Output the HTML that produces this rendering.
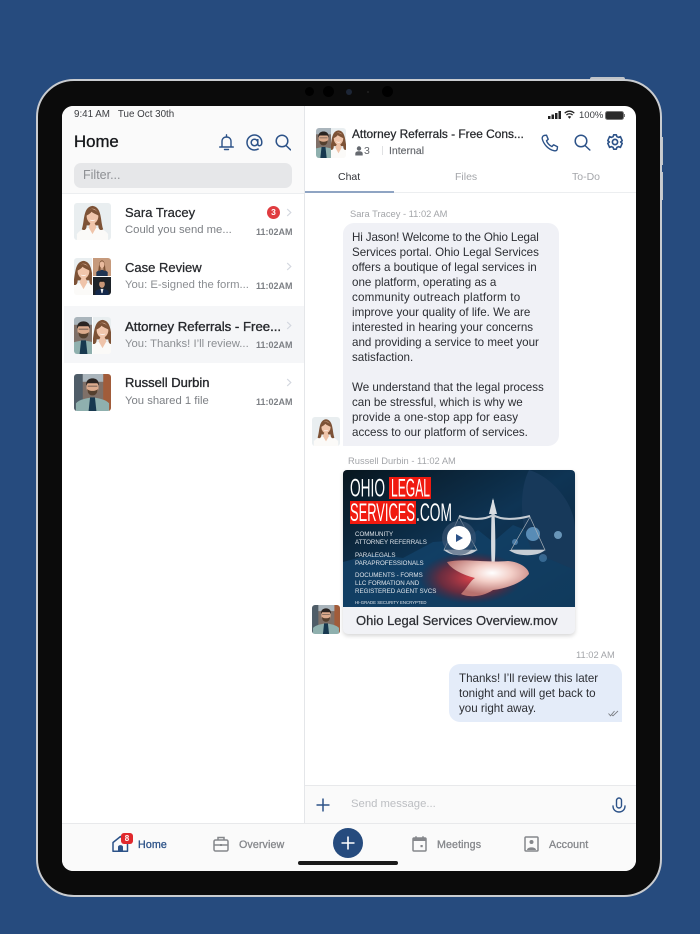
<!DOCTYPE html>
<html><head><meta charset="utf-8"><style>
*{box-sizing:border-box;margin:0;padding:0}
html,body{width:700px;height:934px;overflow:hidden;background:#264b7e;font-family:"Liberation Sans",sans-serif}
.a{position:absolute}
.t{position:absolute;white-space:nowrap;line-height:1}
.name{font-size:13px;color:#26282c;font-weight:normal;-webkit-text-stroke:.25px #26282c}
.sub{font-size:11.3px;color:#7d8085}
.time{font-size:9px;color:#7d8085;font-weight:bold}
.msg{font-size:11.6px;color:#2c2e33}
.meta{font-size:9.35px;color:#a3a5a9}
.nav{font-size:10.7px;color:#85878b;-webkit-text-stroke:.3px #85878b;letter-spacing:.1px}
.av{position:absolute;overflow:hidden;border-radius:3px}
.av svg{filter:blur(.35px)}
svg{position:absolute;display:block}
</style></head><body>
<svg width="0" height="0" style="position:absolute"><defs>
<symbol id="w" viewBox="0 0 38 38" preserveAspectRatio="xMidYMid slice"><rect width="38" height="38" fill="#e9eef0"/><path d="M3 38V32C6 27 12 26 19 25C26 26 32 27 35 32V38Z" fill="#fbfaf8"/><path d="M8 27C11 19 9 4 19 3C29 4 27 19 30 27C27 29 25 27 25 23H13C13 27 11 29 8 27Z" fill="#7d5236"/><path d="M15 25L19 32L23 25L21 20H17Z" fill="#efc4aa"/><ellipse cx="19" cy="13.500" rx="6" ry="7.600" fill="#f0c5ab"/><path d="M12.500 13C13 7 17 5.500 20 6.500C23 7.500 25 9 25.500 13C22 11.500 19 10 18 9C17 10.500 15 12 12.500 13Z" fill="#7d5236"/><path d="M16 16.800C17.500 18 20.500 18 22 16.800C21 19 17 19 16 16.800Z" fill="#fff"/></symbol>
<symbol id="m" viewBox="0 0 38 38" preserveAspectRatio="xMidYMid slice"><rect width="38" height="38" fill="#7f7068"/><rect x="0" width="9" height="38" fill="#4f5d68"/><rect x="30" width="8" height="38" fill="#a15c3a"/><rect x="9" width="21" height="8" fill="#aab5bc"/><path d="M2 38V30C6 26 12 25 19 24C26 25 32 26 36 30V38Z" fill="#8fb0ae"/><path d="M15 38L16.500 24H21.500L23 38Z" fill="#17384f"/><ellipse cx="19" cy="13.500" rx="6.200" ry="8" fill="#dcab8d"/><path d="M12.500 12C12 6 16 4.500 19 4.500C22 4.500 26 6 25.500 12L24 9.500H14Z" fill="#2a2421"/><path d="M13.500 15.500C14 20 16 22 19 22C22 22 24 20 24.500 15.500C22 18 16 18 13.500 15.500Z" fill="#54402f"/><path d="M14 12.500H24" stroke="#2c2c2c" stroke-width="1" opacity=".6"/></symbol>
<symbol id="d" viewBox="0 0 38 38" preserveAspectRatio="xMidYMid slice"><rect width="38" height="38" fill="#1d2228"/><path d="M5 38V30C9 26 14 25 19 25C24 25 29 26 33 30V38Z" fill="#14294b"/><path d="M16 25H22L20 34H18Z" fill="#eee"/><ellipse cx="19" cy="15" rx="6" ry="8" fill="#c99676"/><path d="M13 13C13 8 16 7 19 7C22 7 25 8 25 13L23.500 10H14.500Z" fill="#151515"/></symbol>
<symbol id="w2" viewBox="0 0 38 38" preserveAspectRatio="xMidYMid slice"><rect width="38" height="38" fill="#c69a7c"/><path d="M7 38V30C10 26 15 25 19 25C23 25 28 26 31 30V38Z" fill="#1f3554"/><path d="M11 27C13 18 12 6 19 5C26 6 25 18 27 27H22V20H16V27Z" fill="#7b5135"/><ellipse cx="19" cy="14" rx="5" ry="7" fill="#e9bb9f"/></symbol>
<linearGradient id="vg" x1="0" y1="0" x2="1" y2="1"><stop offset="0" stop-color="#08161f"/><stop offset=".5" stop-color="#0e3454"/><stop offset="1" stop-color="#0b2238"/></linearGradient>
<radialGradient id="glow" cx=".5" cy=".5" r=".5"><stop offset="0" stop-color="#d8424a"/><stop offset=".6" stop-color="#8f2530" stop-opacity=".7"/><stop offset="1" stop-color="#5a1a2b" stop-opacity="0"/></radialGradient>
<radialGradient id="hand" cx=".55" cy=".35" r=".6"><stop offset="0" stop-color="#fff"/><stop offset=".4" stop-color="#f3cfc8"/><stop offset="1" stop-color="#b9716e"/></radialGradient>
</defs></svg>

<!-- device -->
<div class="a" style="left:590px;top:77px;width:35px;height:5px;background:#bfc3c8;border-radius:2px 2px 0 0"></div>
<div class="a" style="left:660px;top:137px;width:3px;height:28px;background:#c2c6ca"></div>
<div class="a" style="left:660px;top:172px;width:3px;height:28px;background:#c2c6ca"></div>
<div class="a" style="left:36px;top:79px;width:626px;height:818px;background:#0b0b0b;border:2px solid #c9ccd0;border-radius:38px"></div>
<div class="a" style="left:305px;top:87px;width:9px;height:9px;border-radius:50%;background:#000"></div>
<div class="a" style="left:323px;top:86px;width:11px;height:11px;border-radius:50%;background:#000"></div>
<div class="a" style="left:346px;top:89px;width:6px;height:6px;border-radius:50%;background:#1d2636"></div>
<div class="a" style="left:367px;top:91px;width:2px;height:2px;border-radius:50%;background:#222"></div>
<div class="a" style="left:382px;top:86px;width:11px;height:11px;border-radius:50%;background:#000"></div>

<!-- screen -->
<div class="a" style="left:62px;top:106px;width:574px;height:765px;background:#fff;border-radius:11px;overflow:hidden">
  <div class="a" style="left:0;top:0;width:242px;height:87px;background:#fafafa"></div>
  <div class="a" style="left:0;top:87px;width:242px;height:1px;background:#eceef0"></div>
  <div class="a" style="left:242px;top:0;width:1px;height:717px;background:#e4e6e9"></div>
  <div class="a" style="left:2px;top:200px;width:240px;height:57px;background:#f5f6f8"></div>
  <div class="a" style="left:243px;top:86px;width:331px;height:1px;background:#eceef0"></div>
  <div class="a" style="left:243px;top:85px;width:89px;height:2px;background:#8fa4c3"></div>
  <div class="a" style="left:243px;top:679px;width:331px;height:38px;background:#fafafa;border-top:1px solid #e8e9eb"></div>
  <div class="a" style="left:0;top:717px;width:574px;height:48px;background:#fafafa;border-top:1px solid #e8e9eb"></div>
  <div class="a" style="left:12px;top:57px;width:218px;height:25px;background:#e6e7e9;border-radius:7px"></div>
</div>

<!-- status -->
<div class="t" style="left:74px;top:110px;font-size:9.8px;color:#3a3c40">9:41 AM&nbsp;&nbsp; Tue Oct 30th</div>
<svg style="left:548px;top:111px" width="14" height="8"><rect x="0" y="5" width="2.500" height="3" fill="#222"/><rect x="3.500" y="3.500" width="2.500" height="4.500" fill="#222"/><rect x="7" y="2" width="2.500" height="6" fill="#222"/><rect x="10.500" y="0" width="2.500" height="8" fill="#222"/></svg>
<svg style="left:564px;top:110px" width="11" height="9" viewBox="0 0 11 9" fill="none" stroke="#222" stroke-width="1.300"><path d="M.7 3.200C3.500.5 7.500.5 10.300 3.200M2.400 5C4.200 3.300 6.800 3.300 8.600 5"/><path d="M5.500 8.800L3.800 6.700C4.800 5.900 6.200 5.900 7.200 6.700Z" fill="#222" stroke="none"/></svg>
<div class="t" style="left:579px;top:110.500px;font-size:9.500px;color:#3a3c40">100%</div>
<div class="a" style="left:604.500px;top:111px;width:19px;height:9px;background:#2a2a2a;border:1px solid #777;border-radius:2.500px"></div>
<div class="a" style="left:623.500px;top:114px;width:1.500px;height:3px;background:#777"></div>

<!-- left header -->
<div class="t" style="left:74px;top:134px;font-size:16.800px;color:#16181b;-webkit-text-stroke:.35px #16181b">Home</div>
<svg style="left:219px;top:134px" width="15" height="17" viewBox="0 0 15 17" fill="none" stroke="#2c5288" stroke-width="1.400"><path d="M3 12.500V7.500C3 4.800 4.800 3 7.500 3C10.200 3 12 4.800 12 7.500V12.500"/><path d="M.8 13H14.200" stroke-linecap="round" stroke-width="1.600"/><path d="M7.500 .8V3M5.500 15.500H9.500" stroke-linecap="round"/></svg>
<svg style="left:246px;top:134px" width="17" height="17" viewBox="0 0 17 17" fill="none" stroke="#2c5288" stroke-width="1.500"><circle cx="8.500" cy="8.500" r="3.300"/><path d="M11.800 5V10C11.800 12.500 15.800 12.500 15.800 8.500C15.800 4.300 12.500 1 8.500 1C4.400 1 1 4.300 1 8.500C1 12.700 4.400 16 8.500 16C10.200 16 11.500 15.600 12.700 14.800"/></svg>
<svg style="left:275px;top:134px" width="16" height="17" viewBox="0 0 16 17" fill="none" stroke="#2c5288" stroke-width="1.500"><circle cx="7" cy="7" r="5.800"/><path d="M11 11.500L15.500 15.800" stroke-linecap="round"/></svg>
<div class="t" style="left:83px;top:169px;font-size:12.500px;color:#8e9094">Filter...</div>

<!-- list -->
<div class="av" style="left:74px;top:203px;width:37px;height:37px"><svg width="37" height="37"><use href="#w" width="37" height="37"/></svg></div>
<div class="t name" style="left:125px;top:206px">Sara Tracey</div>
<div class="t sub" style="left:125px;top:224.500px">Could you send me...</div>
<div class="a" style="left:267px;top:206px;width:13px;height:13px;border-radius:50%;background:#e03c40;color:#fff;font-size:8.500px;font-weight:bold;text-align:center;line-height:13px">3</div>
<svg style="left:286px;top:208px" width="6" height="9" fill="none" stroke="#d3d7df" stroke-width="1.200"><path d="M1.200 1L4.800 4.500L1.200 8"/></svg>
<div class="t time" style="left:256px;top:227.500px">11:02AM</div>

<div class="av" style="left:74px;top:258px;width:37px;height:37px;background:#fff">
 <svg style="left:0;top:0" width="18" height="37"><use href="#w" x="-9" y="0" width="37" height="37"/></svg>
 <svg style="left:19px;top:0" width="18" height="18"><use href="#w2" width="18" height="18"/></svg>
 <svg style="left:19px;top:19px" width="18" height="18"><use href="#d" width="18" height="18"/></svg>
</div>
<div class="t name" style="left:125px;top:261px">Case Review</div>
<div class="t sub" style="left:125px;top:279.500px;color:#8b8e92">You: E-signed the form...</div>
<svg style="left:286px;top:262px" width="6" height="9" fill="none" stroke="#d3d7df" stroke-width="1.200"><path d="M1.200 1L4.800 4.500L1.200 8"/></svg>
<div class="t time" style="left:256px;top:281.500px">11:02AM</div>

<div class="av" style="left:74px;top:317px;width:37px;height:37px;background:#fff">
 <svg style="left:0;top:0" width="18" height="37"><use href="#m" x="-9" y="0" width="37" height="37"/></svg>
 <svg style="left:19px;top:0" width="18" height="37"><use href="#w" x="-9" y="0" width="37" height="37"/></svg>
</div>
<div class="t name" style="left:125px;top:320px;-webkit-text-stroke:.35px #26282c;font-size:13.200px">Attorney Referrals - Free...</div>
<div class="t sub" style="left:125px;top:338.500px;color:#8b8e92">You: Thanks! I’ll review...</div>
<svg style="left:286px;top:321px" width="6" height="9" fill="none" stroke="#d3d7df" stroke-width="1.200"><path d="M1.200 1L4.800 4.500L1.200 8"/></svg>
<div class="t time" style="left:256px;top:340.500px">11:02AM</div>

<div class="av" style="left:74px;top:374px;width:37px;height:37px"><svg width="37" height="37"><use href="#m" width="37" height="37"/></svg></div>
<div class="t name" style="left:125px;top:376px;-webkit-text-stroke:.35px #26282c">Russell Durbin</div>
<div class="t sub" style="left:125px;top:395.500px">You shared 1 file</div>
<svg style="left:286px;top:378px" width="6" height="9" fill="none" stroke="#d3d7df" stroke-width="1.200"><path d="M1.200 1L4.800 4.500L1.200 8"/></svg>
<div class="t time" style="left:256px;top:397.500px">11:02AM</div>

<!-- chat header -->
<div class="av" style="left:316px;top:128px;width:30px;height:30px;background:#fff">
 <svg style="left:0;top:0" width="15" height="30"><use href="#m" x="-7.500" y="0" width="30" height="30"/></svg>
 <svg style="left:15px;top:0" width="15" height="30"><use href="#w" x="-7.500" y="0" width="30" height="30"/></svg>
</div>
<div class="t" style="left:352px;top:129px;font-size:11.900px;color:#26282c;-webkit-text-stroke:.25px #26282c">Attorney Referrals - Free Cons...</div>
<svg style="left:355px;top:146px" width="8" height="10"><circle cx="4" cy="2.500" r="2.200" fill="#666a70"/><path d="M.3 9.500V7.500C.3 6 2 5.300 4 5.300C6 5.300 7.700 6 7.700 7.500V9.500Z" fill="#666a70"/></svg>
<div class="t" style="left:364px;top:145.500px;font-size:10.500px;color:#63666b">3</div>
<div class="a" style="left:382px;top:146px;width:1px;height:9px;background:#e0e1e3"></div>
<div class="t" style="left:389px;top:145.500px;font-size:10.500px;color:#63666b;-webkit-text-stroke:.15px #63666b">Internal</div>
<svg style="left:541px;top:134px" width="18" height="18" viewBox="0 0 18 18" fill="none" stroke="#2c5288" stroke-width="1.400"><path d="M3 1.500L5.500 1.200L7.200 5.300L5.500 6.800C6.300 9 8.500 11.500 11 12.600L12.500 10.800L16.500 12.700L16.200 15.300C15.800 16.700 14.300 17 13 16.700C7.500 15.500 2.700 10.500 1.300 5C1 3.500 1.600 2 3 1.500Z" stroke-linejoin="round"/></svg>
<svg style="left:574px;top:134px" width="17" height="17" viewBox="0 0 17 17" fill="none" stroke="#2c5288" stroke-width="1.500"><circle cx="7" cy="7" r="5.800"/><path d="M11 11.500L15.800 16" stroke-linecap="round"/></svg>
<svg style="left:607px;top:134px" width="16" height="16" viewBox="0 0 16 16" fill="none" stroke="#2c5288"><path d="M6.700 .8H9.300L9.900 2.600L11.700 3.400L13.400 2.600L15.200 6.700L13.600 8L15.200 9.300L13.400 13.400L11.700 12.600L9.900 13.400L9.300 15.200H6.700L6.100 13.400L4.300 12.600L2.600 13.400L.8 9.300L2.400 8L.8 6.700L2.600 2.600L4.300 3.400L6.100 2.600Z" stroke-width="1.600" stroke-linejoin="round"/><circle cx="8" cy="8" r="2.600" stroke-width="1.700"/></svg>
<div class="t" style="left:338px;top:172px;font-size:10.500px;color:#33353a">Chat</div>
<div class="t" style="left:455px;top:172px;font-size:10.500px;color:#a4a6aa">Files</div>
<div class="t" style="left:572px;top:172px;font-size:10.500px;color:#a4a6aa">To-Do</div>

<!-- messages -->
<div class="t meta" style="left:350px;top:209.500px">Sara Tracey - 11:02 AM</div>
<div class="a" style="left:343px;top:223px;width:216px;height:223px;background:#f0f1f6;border-radius:11px 11px 11px 0"></div>
<div class="t msg" style="left:352px;top:232px;letter-spacing:-.13px">Hi Jason! Welcome to the Ohio Legal</div>
<div class="t msg" style="left:352px;top:247px">Services portal. Ohio Legal Services</div>
<div class="t msg" style="left:352px;top:262px">offers a boutique of legal services in</div>
<div class="t msg" style="left:352px;top:277px">one platform, operating as a</div>
<div class="t msg" style="left:352px;top:292px;letter-spacing:.2px">community outreach platform to</div>
<div class="t msg" style="left:352px;top:307px">improve your quality of life. We are</div>
<div class="t msg" style="left:352px;top:322px">interested in hearing your concerns</div>
<div class="t msg" style="left:352px;top:337px">and providing a service to meet your</div>
<div class="t msg" style="left:352px;top:352px">satisfaction.</div>
<div class="t msg" style="left:352px;top:382px">We understand that the legal process</div>
<div class="t msg" style="left:352px;top:397px">can be stressful, which is why we</div>
<div class="t msg" style="left:352px;top:412px;letter-spacing:.1px">provide a one-stop app for easy</div>
<div class="t msg" style="left:352px;top:427px">access to our platform of services.</div>
<div class="av" style="left:312px;top:417px;width:28px;height:29px"><svg width="28" height="29"><use href="#w" width="28" height="29"/></svg></div>

<div class="t meta" style="left:348px;top:456.500px">Russell Durbin - 11:02 AM</div>
<div class="a" style="left:343px;top:470px;width:232px;height:164px;background:#f1f2f6;border-radius:4px 4px 5px 5px;box-shadow:0 2px 4px rgba(0,0,0,.16)"></div>
<div class="a" style="left:343px;top:470px;width:232px;height:137px;overflow:hidden;border-radius:4px 4px 0 0">
 <svg style="left:0;top:0;filter:blur(.3px)" width="232" height="137" viewBox="0 0 232 137">
  <rect width="232" height="137" fill="url(#vg)"/>
  <path d="M0 92L30 84L60 88L90 72L120 70L135 60L150 72L170 55L232 80V137H0Z" fill="#134369" opacity=".75"/>
  <path d="M186 0C205 5 232 30 232 60V100L190 82C176 55 176 20 186 0Z" fill="#17395a"/>
  <circle cx="190" cy="64" r="7" fill="#6fa8d6" opacity=".75"/><circle cx="215" cy="65" r="4" fill="#8cbce0" opacity=".7"/><circle cx="172" cy="72" r="3" fill="#6aa0cf" opacity=".6"/><circle cx="200" cy="88" r="4" fill="#5b93c4" opacity=".5"/>
  <ellipse cx="128" cy="108" rx="52" ry="26" fill="url(#glow)"/>
  <path d="M150 98C148 88 149 42 150 30C151 42 153 88 150 98Z" fill="#d5dae0" stroke="#d5dae0" stroke-width="1.500"/>
  <path d="M146 44L150 28L154 44Z" fill="#d8dde2"/>
  <path d="M116 46C128 50 142 50 150 45C158 50 172 50 187 46" fill="none" stroke="#c7ced5" stroke-width="2"/>
  <path d="M116 47L101 80H134ZM187 47L168 80H202Z" fill="none" stroke="#aab2ba" stroke-width=".7"/>
  <path d="M101 80C108 87 127 87 134 80ZM166 80C174 87 195 87 202 80Z" fill="#c7ced5"/>
  <path d="M104 92C120 88 140 93 165 91C178 92 186 99 186 104C180 112 166 118 150 120C138 128 124 127 118 124C124 118 128 110 132 108C120 105 108 99 104 92Z" fill="url(#hand)"/>
  <rect x="46" y="7" width="42" height="22" fill="#f01a10"/><rect x="7" y="31" width="66" height="23" fill="#f01a10"/>
  <text x="7" y="26.500" font-family="'Liberation Sans',sans-serif" font-size="25" fill="#fff" textLength="35" lengthAdjust="spacingAndGlyphs">OHIO</text>
  <text x="48" y="26.500" font-family="'Liberation Sans',sans-serif" font-size="25" fill="#fff" textLength="39" lengthAdjust="spacingAndGlyphs">LEGAL</text>
  <text x="7" y="51" font-family="'Liberation Sans',sans-serif" font-size="25" fill="#fff" textLength="65" lengthAdjust="spacingAndGlyphs">SERVICES</text>
  <text x="73" y="51" font-family="'Liberation Sans',sans-serif" font-size="25" fill="#fff" textLength="36" lengthAdjust="spacingAndGlyphs">.COM</text>
  <g font-family="'Liberation Sans',sans-serif" font-size="6.200" fill="#dfe4ea">
   <text x="12" y="66">COMMUNITY</text><text x="12" y="74">ATTORNEY REFERRALS</text>
   <text x="12" y="87">PARALEGALS</text><text x="12" y="95">PARAPROFESSIONALS</text>
   <text x="12" y="107">DOCUMENTS - FORMS</text><text x="12" y="115">LLC FORMATION AND</text><text x="12" y="123">REGISTERED  AGENT SVCS</text>
   <text x="12" y="134" font-size="4.300">HI-GRADE SECURITY ENCRYPTED</text>
  </g>
  <circle cx="116" cy="68" r="17" fill="#3f5876" opacity=".6"/>
  <circle cx="116" cy="68" r="12" fill="#fff"/>
  <path d="M113 64L120 68L113 72Z" fill="#2c5288"/>
 </svg>
</div>
<div class="t" style="left:356px;top:614px;font-size:13px;color:#2c2e33;-webkit-text-stroke:.25px #2c2e33">Ohio Legal Services Overview.mov</div>
<div class="av" style="left:312px;top:605px;width:28px;height:29px"><svg width="28" height="29"><use href="#m" width="28" height="29"/></svg></div>

<div class="t meta" style="left:576px;top:650.500px">11:02 AM</div>
<div class="a" style="left:449px;top:664px;width:173px;height:58px;background:#e4ecf9;border-radius:11px 11px 0 11px"></div>
<div class="t msg" style="left:459px;top:672.500px">Thanks! I’ll review this later</div>
<div class="t msg" style="left:459px;top:687.500px">tonight and will get back to</div>
<div class="t msg" style="left:459px;top:702.500px">you right away.</div>
<svg style="left:608px;top:710px" width="11" height="7" fill="none" stroke="#7a7d83" stroke-width=".9"><path d="M.5 3.500L2.500 5.800L6.500 1M4 5L5 5.800L10 1"/></svg>

<!-- input -->
<svg style="left:316px;top:798px" width="14" height="14" stroke="#2c5288" stroke-width="1.500"><path d="M7 .5V13.500M.5 7H13.500"/></svg>
<div class="t" style="left:351px;top:798.500px;font-size:11.300px;color:#bcbec2">Send message...</div>
<svg style="left:612px;top:797px" width="14" height="17" viewBox="0 0 14 17" fill="none" stroke="#2c5288" stroke-width="1.400"><rect x="4.500" y="1" width="5" height="10" rx="2.500"/><path d="M1 9C1 17 13 17 13 9" stroke-linecap="round"/></svg>

<!-- tab bar -->
<svg style="left:112px;top:835px" width="17" height="17" viewBox="0 0 17 17" fill="none" stroke="#2c5288" stroke-width="1.500"><path d="M1 16.200V7.500L8.500 1.500L15.500 7.500V16.200Z" stroke-linejoin="round"/><path d="M6 16.500V12C6 9.500 11 9.500 11 12V16.500Z" fill="#2c5288" stroke="none"/></svg>
<div class="a" style="left:121px;top:833px;width:12px;height:11px;background:#e0282c;border-radius:3px;color:#fff;font-size:8px;font-weight:bold;text-align:center;line-height:11px">8</div>
<div class="t nav" style="left:138px;top:839.500px;color:#2c5288;-webkit-text-stroke:.3px #2c5288">Home</div>
<svg style="left:213px;top:836px" width="16" height="16" viewBox="0 0 16 16" fill="none" stroke="#85878b" stroke-width="1.500"><rect x="1" y="4" width="14" height="11" rx="1.500"/><path d="M5 4V1.500H11V4M1 9H15"/><rect x="7" y="8" width="2" height="2" fill="#85878b" stroke="none"/></svg>
<div class="t nav" style="left:239px;top:839.500px">Overview</div>
<div class="a" style="left:333px;top:828px;width:30px;height:30px;border-radius:50%;background:#264b7e"></div>
<svg style="left:341px;top:836px" width="14" height="14" stroke="#fff" stroke-width="1.600"><path d="M7 .5V13.500M.5 7H13.500"/></svg>
<div class="a" style="left:298px;top:861px;width:100px;height:4px;border-radius:2px;background:#1a1a1a"></div>
<svg style="left:412px;top:836px" width="15" height="16" viewBox="0 0 15 16" fill="none" stroke="#85878b" stroke-width="1.500"><rect x="1" y="2" width="13" height="13" rx="1"/><path d="M1 3.500H14" stroke-width="3"/><path d="M4 .3V2M11 .3V2"/><rect x="8.500" y="9" width="2.200" height="2.200" fill="#85878b" stroke="none"/></svg>
<div class="t nav" style="left:437px;top:839.500px">Meetings</div>
<svg style="left:524px;top:836px" width="15" height="16" viewBox="0 0 15 16" fill="none" stroke="#85878b" stroke-width="1.500"><rect x="1" y="1" width="13" height="14" rx="1"/><circle cx="7.500" cy="6" r="2" fill="#85878b" stroke="none"/><path d="M3 14C3 10.500 12 10.500 12 14Z" fill="#85878b" stroke="none"/></svg>
<div class="t nav" style="left:549px;top:839.500px">Account</div>
</body></html>
